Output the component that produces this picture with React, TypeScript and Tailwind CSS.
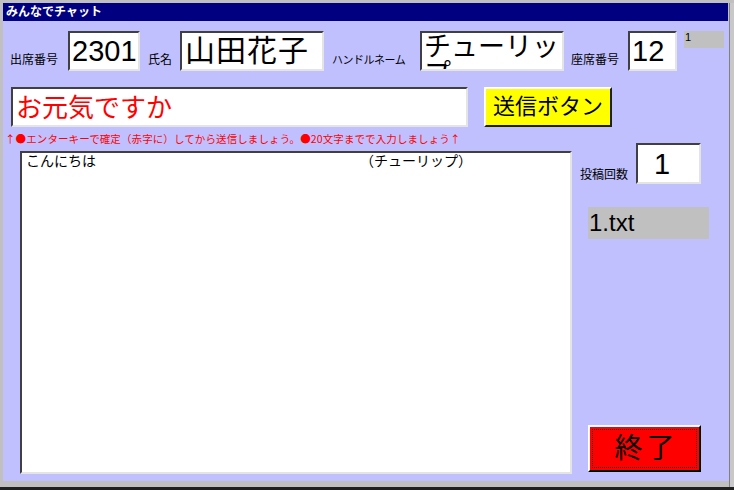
import React from 'react';

const font = { fontFamily: '"Liberation Sans", "Noto Sans CJK JP", sans-serif' };
const jp = { fontFamily: '"Noto Sans CJK JP", sans-serif' };

const sunken =
  'bg-white border-2 border-t-[#404040] border-l-[#404040] border-b-[#e4e4e4] border-r-[#e4e4e4] overflow-hidden leading-none';

export default function App() {
  return (
    <div style={font} className="w-[734px] h-[490px] bg-[#c0c0c0] flex flex-col">
      <div className="flex flex-1 min-h-0 pt-[3px] pl-[3px]">
        <div className="flex flex-col flex-1 min-w-0 mb-[6px]">
          {/* title bar */}
          <div className="h-[18px] bg-[#000080] text-white text-[12px] font-bold flex items-center pl-[3px] mr-[1px]">
            みんなでチャット
          </div>

          <div className="flex-1 bg-[#c0c0ff] flex flex-col text-black">
            {/* row 1 */}
            <div className="flex items-start mt-[10px] h-[40px]">
              <span className="text-[12px] ml-[7px] mt-[20px] w-[58px]">出席番号</span>
              <div className={`${sunken} w-[72px] h-[40px] text-[29px] pl-[2px] pt-[4px]`}>2301</div>
              <span className="text-[12px] ml-[8px] mt-[20px] w-[32px]">氏名</span>
              <div className={`${sunken} w-[144px] h-[40px] text-[30px] pl-[3px] pt-[3px] tracking-[1px]`}>山田花子</div>
              <span className="text-[11px] ml-[8px] mt-[21px] w-[88px] tracking-[-0.5px]">ハンドルネーム</span>
              <div className={`${sunken} w-[144px] h-[40px] text-[27px] pl-[2px] pt-[1px] leading-[35px] break-all`}>
                チューリップ
              </div>
              <span className="text-[12px] ml-[7px] mt-[20px] w-[57px]">座席番号</span>
              <div className={`${sunken} w-[49px] h-[40px] text-[29px] pl-[2px] pt-[4px]`}>12</div>
              <div className="ml-[7px] w-[40px] h-[17px] bg-[#c0c0c0] text-[11px] leading-none pl-[1px] pt-[1px]">1</div>
            </div>

            {/* row 2 */}
            <div className="flex items-start mt-[16px]">
              <div className={`${sunken} ml-[8px] w-[457px] h-[40px] text-[26px] text-[#ff0000] pl-[3px] pt-[6px]`}>
                お元気ですか
              </div>
              <button className="ml-[16px] w-[128px] h-[40px] bg-[#ffff00] border-2 border-t-white border-l-white border-b-[#202020] border-r-[#202020] text-[22px] leading-none flex items-center justify-center">
                送信ボタン
              </button>
            </div>

            {/* row 3 */}
            <div className="flex flex-1 min-h-0 mt-[5px]">
              <div className="flex flex-col w-[577px]">
                <div
                  style={jp}
                  className="text-[10.5px] text-[#ff0000] ml-[2px] leading-[14px] whitespace-nowrap tracking-[0.1px]"
                >
                  ↑●エンターキーで確定（赤字に）してから送信しましょう。●20文字までで入力しましょう↑
                </div>
                <div className={`${sunken} ml-[17px] mt-[5px] w-[552px] h-[323px] text-[14px] leading-[16px] pl-[4px] pt-[1px]`}>
                  <div className="flex">
                    <span className="w-[334px]">こんにちは</span>
                    <span>（チューリップ）</span>
                  </div>
                </div>
              </div>

              <div className="flex flex-col pt-[11px]">
                <div className="flex items-start">
                  <span className="text-[12px] mt-[23px] w-[56px]">投稿回数</span>
                  <div className={`${sunken} w-[65px] h-[41px] text-[29px] pl-[16px] pt-[5px]`}>1</div>
                </div>
                <div className="mt-[23px] ml-[8px] w-[121px] h-[32px] bg-[#c0c0c0] text-[24px] leading-none pl-[1px] pt-[4px]">
                  1.txt
                </div>
                <div className="flex-1" />
                <button className="ml-[8px] mb-[9px] w-[113px] h-[47px] bg-[#ff0000] border-2 border-t-white border-l-white border-b-black border-r-black p-[2px] outline-none">
                  <div className="w-full h-full border border-dotted border-black flex items-center justify-center text-[28px] leading-none tracking-[4px] pl-[4px]">
                    終了
                  </div>
                </button>
              </div>
            </div>
          </div>
        </div>
        <div className="w-[5px] border-l border-[#808080] bg-[#c8c8c8]" />
      </div>
      <div className="h-[3px] bg-[#202020]" />
    </div>
  );
}
